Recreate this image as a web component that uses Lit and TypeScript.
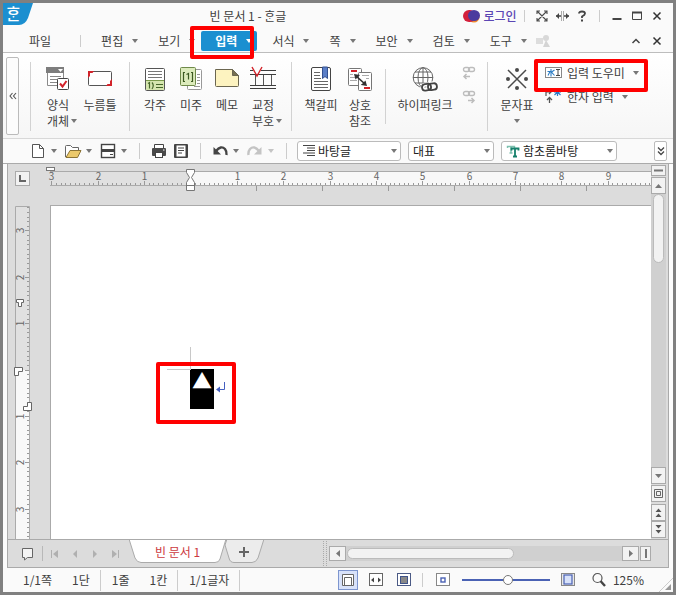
import { LitElement, html, svg, css, nothing } from "lit";
import { customElement, state } from "lit/decorators.js";
import { classMap } from "lit/directives/class-map.js";

const UNIT = 46.35;

const caret = html`<svg class="caret" width="6" height="4" viewBox="0 0 6 4" aria-hidden="true"><path d="M0 0H6L3 4Z" fill="currentColor" /></svg>`;

const icon = (w: number, h: number, body: unknown) =>
  html`<svg width=${w} height=${h} viewBox="0 0 ${w} ${h}" fill="none" aria-hidden="true">${body}</svg>`;

const formObject = icon(26, 26, svg`
  <path d="M2.500 2.500H18.500V19.500H2.500Z" fill="#fff" stroke="#8a8a8a"/>
  <path d="M1 1H19V7H1Z" fill="#7d7d7d"/><path d="M13 3H18L15.500 6Z" fill="#fff"/>
  <path d="M5 10.500H16M5 13.500H12M5 16.500H12" stroke="#888"/>
  <rect x="12.500" y="12.500" width="11" height="11" rx="1" fill="#fff" stroke="#444"/>
  <path d="M15 17.500L17.500 20.500L21.500 15" stroke="#d2232a" stroke-width="2"/>`);
const pressField = icon(26, 26, svg`
  <rect x="1.500" y="5.500" width="23" height="14" rx="1" fill="#fff" stroke="#555"/>
  <path d="M1 5H7L5.500 7H3V10L1 12Z" fill="#d2232a"/><path d="M25 20H19L20.500 18H23V15L25 13Z" fill="#d2232a"/>`);
const footnote = icon(26, 26, svg`
  <rect x="3.500" y="2.500" width="19" height="22" rx="1" fill="#fff" stroke="#555"/>
  <path d="M4 15H22V24H4Z" fill="#d5e6ae"/><path d="M4 14.500H22" stroke="#7a9a4a"/>
  <path d="M6 5.500H20M6 8.500H20M6 11.500H20" stroke="#777"/>
  <path d="M6 17.500L7.500 16.500V22.500M10 16.500Q12.500 19.500 10 23M14 18.500H21M14 21.500H21" stroke="#47672a" stroke-width="1.200"/>`);
const endnote = icon(26, 26, svg`
  <rect x="9.500" y="3.500" width="14" height="20" rx="1" fill="#fff" stroke="#999"/>
  <path d="M19 8.500H22M19 11.500H22M19 14.500H22M19 17.500H22M16 20.500H22" stroke="#999"/>
  <rect x="2.500" y="1.500" width="15" height="18" rx="1" fill="#dcebbc" stroke="#6f8a4a"/>
  <path d="M7 6.500H5.500V15.500H7M13 6.500H14.500V15.500H13M8.500 8.500L10.500 7.500V13.500" stroke="#3c5a22" stroke-width="1.200"/>`);
const memo = icon(26, 26, svg`
  <path d="M1.500 3.500H18.500L24.500 9.500V19.500Q24.500 20.500 23.500 20.500H2.500Q1.500 20.500 1.500 19.500Z" fill="#fdf3c0" stroke="#6b6650"/>
  <path d="M18.500 3.500V9.500H24.500Z" fill="#777052" stroke="#6b6650"/>`);
const proof = icon(28, 26, svg`
  <path d="M1 4.500H4M12 4.500H27M1 8.500H27M1 19.500H27M1 22.500H27" stroke="#3d3d3d"/>
  <path d="M6.500 9V19M14.500 9V19M22.500 9V19" stroke="#555"/>
  <path d="M3 1L8 10L13 1" stroke="#d2232a" stroke-width="1.400"/>`);
const bookmark = icon(26, 26, svg`
  <rect x="3.500" y="1.500" width="19" height="23" rx="1.500" fill="#fff" stroke="#444"/>
  <path d="M6 6.500H12M6 9.500H12M6 12.500H13M6 15.500H20M6 18.500H20M6 21.500H20" stroke="#666"/>
  <path d="M14.500 1V12.500L17 10.500L19.500 12.500V1Z" fill="#5b7fc7" stroke="#34518f"/>`);
const crossRef = icon(26, 26, svg`
  <rect x="1.500" y="2.500" width="13" height="17" rx="1" fill="#fff" stroke="#777"/>
  <rect x="11.500" y="6.500" width="13" height="18" rx="1" fill="#fff" stroke="#777"/>
  <path d="M4 4.500H10M4 5.500H10" stroke="#d2232a"/><path d="M17 21.500H23M17 22.500H23" stroke="#d2232a"/>
  <path d="M3 8.500H6M3 11.500H8M3 14.500H10M15 9.500H22M19 12.500H22M14 18.500H18" stroke="#aaa"/>
  <path d="M9 10L18 18" stroke="#333" stroke-width="1.600"/><path d="M7 8L13 9L8.500 13.500Z" fill="#333"/><path d="M20 20L14 19L18.500 14.500Z" fill="#333"/>`);
const globe = icon(28, 26, svg`
  <circle cx="12" cy="11.500" r="9.800" fill="#fff" stroke="#666"/>
  <ellipse cx="12" cy="11.500" rx="5" ry="9.800" stroke="#666"/>
  <path d="M12 1.500V21.500M2 11.500H22M4 6H20M4 17H20" stroke="#666"/>
  <rect x="11.500" y="18.500" width="9" height="6" rx="3" stroke="#fff" stroke-width="4"/><rect x="17.500" y="17.500" width="9" height="6" rx="3" stroke="#fff" stroke-width="4"/>
  <rect x="11" y="18" width="9" height="6.500" rx="3.200" stroke="#444" stroke-width="1.800" transform="rotate(-8 15 21)"/>
  <rect x="17" y="17.500" width="9" height="6.500" rx="3.200" stroke="#444" stroke-width="1.800" transform="rotate(-8 21 21)"/>`);
const linkPrev = icon(14, 14, svg`
  <rect x="1.500" y="1.500" width="6" height="4" rx="2" stroke="#bdbdbd" stroke-width="1.400"/><rect x="6.500" y="1.500" width="6" height="4" rx="2" stroke="#bdbdbd" stroke-width="1.400"/>
  <path d="M2 10.500H8M4.500 8L2 10.500L4.500 13" stroke="#bdbdbd" stroke-width="1.500"/>`);
const linkNext = icon(14, 14, svg`
  <rect x="1.500" y="1.500" width="6" height="4" rx="2" stroke="#bdbdbd" stroke-width="1.400"/><rect x="6.500" y="1.500" width="6" height="4" rx="2" stroke="#bdbdbd" stroke-width="1.400"/>
  <path d="M6 10.500H12M9.500 8L12 10.500L9.500 13" stroke="#bdbdbd" stroke-width="1.500"/>`);
const symbols = icon(26, 26, svg`
  <path d="M4 4L22 22M22 4L4 22" stroke="#4a4a4a" stroke-width="1.500"/>
  <circle cx="13" cy="4" r="2" fill="#4a4a4a"/><circle cx="13" cy="22" r="2" fill="#4a4a4a"/>
  <circle cx="4" cy="13" r="2" fill="#4a4a4a"/><circle cx="22" cy="13" r="2" fill="#4a4a4a"/>`);
const helper = icon(17, 12, svg`
  <rect x="0.500" y="0.500" width="16" height="10" fill="#fff" stroke="#888"/>
  <path d="M6 2V9.500M2.500 4.500H5L3 8.500M9.500 3L6.500 5L9.500 8.500" stroke="#2b7cc4" stroke-width="1.100"/>
  <path d="M11 2.500H15M13 2.500V8.500M11 8.500H15" stroke="#444"/>`);
const hanja = icon(17, 14, svg`
  <path d="M1 6V2H6M4 0L6 2L4 4" stroke="#555" stroke-width="1.200"/>
  <path d="M4.500 13V8M2 10L4.500 7.500L7 10" stroke="#555" stroke-width="1.300"/>
  <path d="M12.500 0V6M9 2H16M12.500 2L9.500 5M12.500 2L15.500 5" stroke="#2b7cc4" stroke-width="1.200"/>`);

const newDoc = icon(18, 18, svg`<path d="M3.500 2.500H10.500L14.500 6.500V15.500H3.500Z" fill="#fff" stroke="#555"/><path d="M10.500 2.500V6.500H14.500" stroke="#555"/>`);
const openDoc = icon(18, 18, svg`
  <path d="M1.500 15V4.500Q1.500 3.500 2.500 3.500H6.500L8.500 5.500H14.500V8" fill="#fff" stroke="#666"/>
  <path d="M2 15.500L6 8.500H17L13.500 15.500Z" fill="#ecc96b" stroke="#8c7436"/>`);
const saveDoc = icon(18, 18, svg`
  <rect x="2.500" y="2.500" width="13" height="13" fill="#fff" stroke="#444" stroke-width="1.400"/>
  <path d="M2 7H16V10H2Z" fill="#444"/><path d="M11 12.500H14" stroke="#444"/>`);
const printDoc = icon(18, 18, svg`
  <path d="M4.500 6V2.500H13.500V6" fill="#fff" stroke="#444"/><rect x="2" y="6" width="14" height="8" rx="1" fill="#4a4a4a"/>
  <rect x="5.500" y="10.500" width="7" height="5" fill="#fff" stroke="#444"/><path d="M13 8H14.500" stroke="#fff"/>`);
const previewDoc = icon(18, 18, svg`
  <rect x="2" y="2" width="14" height="14" rx="1" fill="#444"/><rect x="4.500" y="3.500" width="9" height="11" fill="#fff"/>
  <path d="M6 6H12M6 8.500H12M6 11H10" stroke="#444" stroke-width="1.200"/>`);
const undo = icon(18, 18, svg`<path d="M5 9Q10 3 14 7Q16 9.500 15.500 13" stroke="#444" stroke-width="2.400"/><path d="M2.500 5V12.500H10Z" fill="#444"/>`);
const redo = icon(18, 18, svg`<path d="M13 9Q8 3 4 7Q2 9.500 2.500 13" stroke="#c4c4c4" stroke-width="2.400"/><path d="M15.500 5V12.500H8Z" fill="#c4c4c4"/>`);
const paragraph = icon(14, 14, svg`<path d="M1 1.500H13M5 4H13M5 6.500H13M1 9H13M5 11.500H13" stroke="#444" stroke-width="1.200"/>`);
const fontMark = icon(14, 14, svg`
  <path d="M1.500 4V2.500H8.500V4M5 2.500V9M3.500 9H6.500" stroke="#7cc0ae" stroke-width="1.400"/>
  <path d="M5.500 6.500V4.500H12.500V6.500M9 4.500V12.500M7 12.500H11" stroke="#16806c" stroke-width="1.800"/>`);

const chevrons = icon(8, 10, svg`<path d="M1 1.500L4 4.500L7 1.500M1 5.500L4 8.500L7 5.500" stroke="#444" stroke-width="1.300"/>`);

interface MenuItem { label: string; active?: boolean }
const MENU: MenuItem[] = [
  { label: "편집" }, { label: "보기" }, { label: "입력", active: true }, { label: "서식" },
  { label: "쪽" }, { label: "보안" }, { label: "검토" }, { label: "도구" },
];

@customElement("app-root")
export class AppRoot extends LitElement {
  @state() private across = window.innerWidth - 75;
  @state() private down = window.innerHeight - 261;

  private measure = () => {
    this.across = window.innerWidth - 75;
    this.down = window.innerHeight - 261;
  };

  connectedCallback() {
    super.connectedCallback();
    window.addEventListener("resize", this.measure);
  }

  disconnectedCallback() {
    window.removeEventListener("resize", this.measure);
    super.disconnectedCallback();
  }

  static styles = css`
    :host {
      display: flex; flex-direction: column; box-sizing: border-box; min-height: 100vh;
      border: 3px solid #808080; background: #fafafa; color: #404040;
      font: 12px/16px "Noto Sans CJK KR", "Noto Sans", sans-serif; white-space: nowrap; overflow: hidden;
    }
    * { box-sizing: border-box; }
    svg { display: block; flex: none; }
    button, select { font: inherit; color: inherit; background: none; border: 0; padding: 0; margin: 0; }
    button { display: flex; align-items: center; justify-content: center; flex: none; }
    .grow { flex: 1; }
    .caret { color: #777; }
    .mark { position: absolute; border: 4px solid #f00; border-radius: 2px; pointer-events: none; z-index: 2; }

    .header { border-bottom: 1px solid #bdbdbd; padding-bottom: 1px; }
    .title-row { display: flex; height: 25px; padding-right: 6px; align-items: center; }
    .logo {
      width: 30px; height: 22px; align-self: flex-start; background: #1b8fd0; color: #fff;
      font-size: 16px; line-height: 20px; font-weight: 500; padding-left: 3px;
      clip-path: path("M0 0H30L25 15Q22 22 16 22H0Z");
    }
    .title { flex: 1; text-align: center; margin: 0; font-size: 12px; font-weight: 400; }
    .login { gap: 3px; width: 54px; color: #5b46b4; font-weight: 500; }
    .bar { width: 1px; height: 12px; background: #ccc; margin: 0 7px; flex: none; }
    .tool { width: 20px; height: 20px; }
    .menu-row { display: flex; align-items: center; height: 23px; padding: 3px 6px 0 12px; gap: 1px; }
    .menu-bar { width: 1px; height: 12px; background: #ccc; margin: 0 5px 0 23px; }
    .menu { height: 20px; padding: 0 5px 0 14px; gap: 9px; border-radius: 2px; }
    .menu.active { background: #1b8fd0; color: #fff; font-weight: 700; }
    .menu.active .caret { color: #fff; }
    .slot { position: relative; }
    .mark.menu-mark { left: -11px; top: -5px; width: 64px; height: 33px; }

    .ribbon { display: flex; align-items: flex-start; height: 86px; padding-left: 3px; border-bottom: 1px solid #d8d8d8; background: linear-gradient(#fff, #f6f6f6); }
    .fold { width: 13px; height: 78px; margin: 4px 11px 0 0; border: 1px solid #bbb; border-radius: 2px; background: #fcfcfc; }
    .rule { width: 1px; height: 69px; margin-top: 9px; background: #d2d2d2; flex: none; }
    .rule.short { height: 55px; margin-top: 16px; }
    .group { display: flex; align-items: flex-start; padding: 13px 5px 0 8px; }
    .group.forms { padding: 13px 8px 0 6px; }
    .group.notes { padding: 13px 10px 0 7px; }
    .group.refs { padding: 13px 7px 0 8px; }
    .big { flex-direction: column; justify-content: flex-start; width: 36px; }
    .big.mid { width: 42px; }
    .big.wide { width: 62px; }
    .big svg + span { margin-top: 5px; }
    .line { display: flex; align-items: center; gap: 2px; }
    .line .caret { margin-right: -8px; }
    .line.only .caret { margin: 6px 0 0; }
    .links { display: flex; flex-direction: column; width: 26px; margin-top: -5px; }
    .links button { height: 24px; }
    .side { display: flex; flex-direction: column; padding: 8px 0 0 2px; align-items: flex-start; }
    .row { display: flex; height: 24px; gap: 5px; }
    .row .caret { margin-left: 3px; }
    .mark.row-mark { left: -11px; top: -2px; width: 114px; height: 33px; }

    .toolbar { display: flex; align-items: center; height: 25px; padding: 0 6px 0 26px; border-bottom: 1px solid #aaa; }
    .pair { display: flex; gap: 2px; margin-right: 5px; }
    .pair.last { margin-right: 0; }
    .act { width: 18px; height: 20px; }
    .drop { width: 10px; height: 20px; }
    .faint .caret { color: #c4c4c4; }
    .split { width: 1px; height: 16px; margin: 0 10px; background: #ccc; flex: none; }
    .print { margin-right: 4px; }
    .combo { display: flex; align-items: center; height: 20px; margin-right: 7px; padding: 0 3px 0 4px; border: 1px solid #bbb; border-radius: 3px; background: #fff; color: #222; }
    .combo select { flex: 1; min-width: 0; appearance: none; outline: 0; }
    .combo.style { width: 104px; gap: 2px; }
    .combo.face { width: 86px; }
    .combo.font { width: 116px; gap: 3px; }
    .more { width: 13px; height: 20px; border: 1px solid #bbb; border-radius: 2px; background: #fff; }

    .editor { flex: 1; display: grid; grid-template: 41px 1fr 28px / 42px 1fr 17px; margin: 0 4px; border: 1px solid #aaa; border-top: 0; background: #dcdcdc; }
    .frame { flex: 1; display: flex; flex-direction: column; background: #fcfcfc; }
    .corner { width: 15px; height: 15px; margin: 7px 0 0 7px; border: 1px solid #aaa; background: #f2f2f2; }
    .ruler { overflow: visible; font-size: 10px; fill: #666; }
    .page { position: relative; border: solid #aaa; border-width: 1px 0 0 1px; background: #fff; padding: 163px 0 0 139px; }
    .picked { position: relative; display: flex; justify-content: center; width: 24px; height: 40px; background: #000; }
    .glyph { color: #fff; font-size: 20px; line-height: 24px; }
    .crop { position: absolute; right: 24px; bottom: 40px; width: 24px; height: 23px; border: solid #c8c8c8; border-width: 0 1px 1px 0; margin: 0 -1px -1px 0; }
    .enter { position: absolute; left: 26px; top: 13px; }
    .mark.pick-mark { left: -34px; top: -7px; width: 80px; height: 62px; }

    .vbar { grid-row: 1 / 3; grid-column: 3; display: flex; flex-direction: column; padding: 1px 1px 1px 0; }
    .box { width: 15px; height: 17px; border: 1px solid #aaa; background: #f2f2f2; }
    .box.thin { height: 11px; margin-bottom: 1px; }
    .vtrack { flex: 1; width: 15px; background: #d0d0d0; padding: 0 2px; }
    .vthumb { height: 69px; border: 1px solid #bbb; border-radius: 6px; background: #f2f2f2; }
    .box.gap { margin: 1px 0 2px; }

    .tabs { grid-column: 1 / 4; display: flex; border-top: 1px solid #aaa; }
    .nav { display: flex; align-items: center; width: 121px; padding-left: 13px; }
    .nav .bar { height: 15px; background: #b8b8b8; margin: 0 2px 0 8px; }
    .nav .step { width: 20px; height: 20px; color: #b0b0b0; }
    .tab { position: relative; width: 97px; height: 23px; color: #cc3a40; }
    .tab.plus { width: 40px; margin-left: -2px; }
    .tab svg.shape { position: absolute; left: 0; top: 0; }
    .tab span, .tab .cross { position: relative; }
    .grip { width: 4px; margin: 1px 2px 1px 59px; border: dotted #aaa; border-width: 0 1px; }
    .hbar { flex: 1; display: flex; align-items: flex-start; padding: 6px 17px 0 0; }
    .hbar .box { width: 17px; height: 15px; }
    .hbar .box.end { width: 11px; margin-left: 1px; }
    .htrack { flex: 1; height: 15px; background: #d0d0d0; padding: 2px 1px; }
    .hthumb { width: 61%; height: 11px; border: 1px solid #bbb; border-radius: 6px; background: #f2f2f2; }

    .status { position: relative; display: flex; align-items: center; height: 24px; padding: 0 29px 0 20px; }
    .status .cell { margin-right: 20px; }
    .status .cell.end { margin-right: 10px; }
    .status .bar { height: 21px; margin: 0 11px 0 0; }
    .view { width: 20px; height: 20px; margin-right: 8px; border: 1px solid transparent; }
    .view.on { border-color: #7d95cf; background: #d8e2fa; }
    .status .bar.mid { height: 14px; margin: 0 13px 0 0; }
    .zoom { appearance: none; width: 88px; height: 12px; margin: 0 11px 0 12px; background: linear-gradient(#4a62b4, #4a62b4) center / 100% 2px no-repeat; }
    .zoom::-webkit-slider-thumb { appearance: none; width: 10px; height: 10px; border: 1px solid #777; border-radius: 50%; background: #fff; }
    .lens { margin: 0 6px 0 16px; }
    .size { position: absolute; right: 0; bottom: 0; }
  `;

  private hRuler() {
    const zero = 140.5;
    const marks = [];
    for (let i = -30; zero + (i * UNIT) / 10 < this.across; i++) {
      const x = Math.round(zero + (i * UNIT) / 10) + 0.5;
      marks.push(svg`<path d="M${x} ${i % 10 ? 19 : 17}V21" stroke="#999"/>`);
      if (i % 10 === 0 && i !== 0)
        marks.push(svg`<text x=${x} y="16" text-anchor="middle">${Math.abs(i / 10)}</text>`);
    }
    for (let x = 206.5; x < this.across; x += 66) marks.push(svg`<path d="M${x} 22V27" stroke="#999"/>`);
    return html`<svg class="ruler" width="100%" height="41" aria-hidden="true">
      <rect x="0" y="7" width="100%" height="15" fill="#e0e0e0" />
      <rect x="140" y="7" width=${this.across - 140} height="15" fill="#f8f8f8" />
      <path d="M0 7.500H${this.across}M0 21.500H${this.across}" stroke="#aaa" />
      ${marks}
      <rect x="-3.500" y="3.500" width="8" height="3" fill="#fff" stroke="#777" />
      <path d="M136.500 5.500H144.500V8.500L141.500 13.500L144.500 18.500V26.500H136.500V18.500L139.500 13.500L136.500 8.500ZM136.500 21.500H144.500" fill="#fff" stroke="#777" />
    </svg>`;
  }

  private vRuler() {
    const zero = 164.5;
    const marks = [];
    for (let i = -35; zero + (i * UNIT) / 10 < this.down; i++) {
      const y = Math.round(zero + (i * UNIT) / 10) + 0.5;
      marks.push(svg`<path d="M${i % 10 ? 19 : 17} ${y}H21" stroke="#999"/>`);
      if (i % 10 === 0 && i !== 0)
        marks.push(svg`<text transform="translate(16 ${y}) rotate(-90)" text-anchor="middle">${Math.abs(i / 10)}</text>`);
    }
    return html`<svg class="ruler" width="42" height="100%" aria-hidden="true">
      <rect x="7" y="1" width="15" height="164" fill="#e0e0e0" />
      <rect x="7" y="165" width="15" height=${Math.max(0, this.down - 165)} fill="#f8f8f8" />
      <path d="M7.500 ${this.down}V1.500H21.500V${this.down}" fill="none" stroke="#aaa" />
      ${marks}
      <g fill="#fff" stroke="#666">
        <path d="M8.500 94.500H15.500V97.500H13.500V101.500H10.500V97.500H8.500Z" />
        <path d="M6.500 162.500H14.500V166.500H10.500V170.500H6.500Z" />
        <path d="M19.500 197.500H23.500V205.500H15.500V201.500H19.500Z" />
      </g>
    </svg>`;
  }

  private big(art: unknown, lines: string[], cls = "", drop = false) {
    return html`<button class="big ${cls}">${art}
      ${lines.map((t, i) => html`<span class="line">${t}${drop && i === lines.length - 1 ? caret : nothing}</span>`)}
    </button>`;
  }

  private pair(name: string, art: unknown, last = false, faint = false) {
    return html`<div class=${classMap({ pair: true, last, faint })}>
      <button class="act" aria-label=${name}>${art}</button>
      <button class="drop" aria-label="${name} 옵션">${caret}</button>
    </div>`;
  }

  render() {
    return html`
      <header class="header">
        <div class="title-row">
          <div class="logo">ᄒᆞᆫ</div>
          <h1 class="title">빈 문서 1 - ᄒᆞᆫ글</h1>
          <button class="login">${icon(17, 14, svg`<circle cx="11" cy="8" r="5.500" fill="#f08a2c"/><rect x="0" y="1" width="13" height="12" rx="6" fill="#d3203c"/><ellipse cx="11" cy="6.500" rx="6" ry="5.500" fill="#4b3b9e"/>`)}로그인</button>
          <span class="bar"></span>
          <button class="tool" aria-label="전체 화면">${icon(12, 12, svg`<path d="M1 4V1H4M8 1H11V4M11 8V11H8M4 11H1V8M1.500 1.500L10.500 10.500M10.500 1.500L1.500 10.500" stroke="#4a4a4a" stroke-width="1.100"/>`)}</button>
          <button class="tool" aria-label="너비 조절">${icon(13, 12, svg`<path d="M5.500 1V11M7.500 1V11" stroke="#aaa"/><path d="M0 6H5M8 6H13" stroke="#444" stroke-width="1.400"/><path d="M3 3V9L0 6ZM10 3V9L13 6Z" fill="#444"/>`)}</button>
          <button class="tool" aria-label="도움말">${icon(10, 12, svg`<path d="M2 3.500Q2 1.500 5 1.500Q8 1.500 8 3.500Q8 5 5 6.500V8" stroke="#444" stroke-width="1.800"/><path d="M4 9.500H6V11.500H4Z" fill="#444"/>`)}</button>
          <span class="bar"></span>
          <button class="tool" aria-label="최소화">${icon(10, 10, svg`<path d="M0.500 8H9.500" stroke="#444" stroke-width="2"/>`)}</button>
          <button class="tool" aria-label="최대화">${icon(10, 10, svg`<path d="M0.500 1V8.500H9.500V1" stroke="#444"/><path d="M0 1.500H10" stroke="#444" stroke-width="2"/>`)}</button>
          <button class="tool" aria-label="닫기">${icon(10, 10, svg`<path d="M1.500 1.500L8.500 8.500M8.500 1.500L1.500 8.500" stroke="#333" stroke-width="1.500"/>`)}</button>
        </div>
        <nav class="menu-row">
          <button class="menu">파일</button>
          <span class="menu-bar"></span>
          ${MENU.map((m) => html`<div class="slot">
            <button class=${classMap({ menu: true, active: !!m.active })}>${m.label}${caret}</button>
            ${m.active ? html`<span class="mark menu-mark"></span>` : nothing}
          </div>`)}
          <button class="tool" aria-label="개체" disabled>${icon(16, 14, svg`<path d="M1 4H8V10H1Z" fill="#ddd"/><path d="M8 13L11 6L15 13Z" fill="#d4d4d4"/><circle cx="11" cy="4" r="3" fill="#d8d8d8"/>`)}</button>
          <span class="grow"></span>
          <button class="tool" aria-label="접기">${icon(10, 10, svg`<path d="M1.500 7L5 3.500L8.500 7" stroke="#444" stroke-width="1.500"/>`)}</button>
          <button class="tool" aria-label="문서 닫기">${icon(10, 10, svg`<path d="M1.500 1.500L8.500 8.500M8.500 1.500L1.500 8.500" stroke="#333" stroke-width="1.500"/>`)}</button>
        </nav>
      </header>

      <section class="ribbon">
        <button class="fold" aria-label="이전">${icon(8, 8, svg`<path d="M3.500 1L1 4L3.500 7M7 1L4.500 4L7 7" stroke="#555" stroke-width="1.100"/>`)}</button>
        <span class="rule"></span>
        <div class="group forms">${this.big(formObject, ["양식", "개체"], "mid", true)}${this.big(pressField, ["누름틀"], "mid")}</div>
        <span class="rule"></span>
        <div class="group notes">${this.big(footnote, ["각주"])}${this.big(endnote, ["미주"])}${this.big(memo, ["메모"])}${this.big(proof, ["교정", "부호"], "", true)}</div>
        <span class="rule"></span>
        <div class="group refs">${this.big(bookmark, ["책갈피"], "mid")}${this.big(crossRef, ["상호", "참조"])}</div>
        <span class="rule short"></span>
        <div class="group">${this.big(globe, ["하이퍼링크"], "wide")}
          <div class="links"><button aria-label="이전 링크">${linkPrev}</button><button aria-label="다음 링크">${linkNext}</button></div>
        </div>
        <span class="rule"></span>
        <div class="group"><button class="big mid">${symbols}<span class="line">문자표</span><span class="line only">${caret}</span></button></div>
        <div class="side">
          <div class="slot"><button class="row">${helper}입력 도우미${caret}</button><span class="mark row-mark"></span></div>
          <button class="row">${hanja}한자 입력${caret}</button>
        </div>
      </section>

      <section class="toolbar">
        ${this.pair("새 문서", newDoc)}${this.pair("불러오기", openDoc)}${this.pair("저장", saveDoc, true)}
        <span class="split"></span>
        <button class="act print" aria-label="인쇄">${printDoc}</button>
        <button class="act" aria-label="미리 보기">${previewDoc}</button>
        <span class="split"></span>
        ${this.pair("되돌리기", undo)}${this.pair("다시 실행", redo, true, true)}
        <span class="split"></span>
        <label class="combo style">${paragraph}<select aria-label="스타일"><option>바탕글</option></select>${caret}</label>
        <label class="combo face"><select aria-label="언어"><option>대표</option></select>${caret}</label>
        <label class="combo font">${fontMark}<select aria-label="글꼴"><option>함초롬바탕</option></select>${caret}</label>
        <span class="grow"></span>
        <button class="more" aria-label="더 보기">${chevrons}</button>
      </section>

      <div class="frame">
        <main class="editor">
          <button class="corner" aria-label="탭 종류">${icon(9, 9, svg`<path d="M2 1V7H8" stroke="#666" stroke-width="2"/>`)}</button>
          ${this.hRuler()}
          ${this.vRuler()}
          <article class="page">
            <div class="picked">
              <span class="crop"></span>
              <span class="glyph">▲</span>
              <svg class="enter" width="10" height="11" viewBox="0 0 10 11" fill="none" aria-hidden="true"><path d="M8.500 0V7.500H2" stroke="#4560c0" /><path d="M4 4.500V10.500L0 7.500Z" fill="#4560c0" /></svg>
              <span class="mark pick-mark"></span>
            </div>
          </article>
          <div class="vbar">
            <button class="box thin" aria-label="나누기">${icon(9, 3, svg`<path d="M0 1.500H9" stroke="#777" stroke-width="2"/>`)}</button>
            <button class="box" aria-label="위로">${icon(7, 4, svg`<path d="M0 4H7L3.500 0Z" fill="#777"/>`)}</button>
            <div class="vtrack"><div class="vthumb"></div></div>
            <button class="box" aria-label="아래로">${icon(7, 4, svg`<path d="M0 0H7L3.500 4Z" fill="#777"/>`)}</button>
            <button class="box gap" aria-label="찾아가기">${icon(9, 9, svg`<path d="M0.500 0.500H8.500V8.500H0.500ZM2.500 2.500H6.500V6.500H2.500Z" stroke="#666"/>`)}</button>
            <button class="box" aria-label="이전 쪽">${icon(7, 9, svg`<path d="M0.500 4H6.500L3.500 0.500ZM0.500 9H6.500L3.500 5.500Z" fill="#555"/>`)}</button>
            <button class="box" aria-label="다음 쪽">${icon(7, 9, svg`<path d="M0.500 0H6.500L3.500 3.500ZM0.500 5H6.500L3.500 8.500Z" fill="#555"/>`)}</button>
          </div>
          <div class="tabs">
            <div class="nav">
              <button aria-label="문서 목록">${icon(13, 14, svg`<path d="M1.500 1.500H11.500V10.500H6.500L3.500 13L3.500 10.500H1.500Z" fill="#f4f4f4" stroke="#666"/>`)}</button>
              <span class="bar"></span>
              <button class="step" aria-label="처음">${icon(8, 8, svg`<path d="M0.500 0V8" stroke="currentColor"/><path d="M7 0V8L2 4Z" fill="currentColor"/>`)}</button>
              <button class="step" aria-label="이전">${icon(8, 8, svg`<path d="M6 0V8L2 4Z" fill="currentColor"/>`)}</button>
              <button class="step" aria-label="다음">${icon(8, 8, svg`<path d="M2 0V8L6 4Z" fill="currentColor"/>`)}</button>
              <button class="step" aria-label="끝">${icon(8, 8, svg`<path d="M7.500 0V8" stroke="currentColor"/><path d="M1 0V8L6 4Z" fill="currentColor"/>`)}</button>
            </div>
            <button class="tab"><svg class="shape" width="97" height="23" viewBox="0 0 97 23" aria-hidden="true"><path d="M0 -1L6 18Q8 22.500 12 22.500H86Q90 22.500 91 19L97 -1" fill="#fff" stroke="#aaa" /></svg><span>빈 문서 1</span></button>
            <button class="tab plus" aria-label="새 탭"><svg class="shape" width="40" height="23" viewBox="0 0 40 23" aria-hidden="true"><path d="M1 5L5 18Q6 22.500 10 22.500H28Q32 22.500 34 18L40 -1H3Z" fill="#ececec" stroke="#aaa" /></svg><svg class="cross" width="10" height="10" viewBox="0 0 10 10" aria-hidden="true"><path d="M5 0V10M0 5H10" stroke="#666" stroke-width="2" /></svg></button>
            <span class="grip"></span>
            <div class="hbar">
              <button class="box" aria-label="왼쪽">${icon(4, 7, svg`<path d="M4 0V7L0 3.500Z" fill="#777"/>`)}</button>
              <div class="htrack"><div class="hthumb"></div></div>
              <button class="box" aria-label="오른쪽">${icon(4, 7, svg`<path d="M0 0V7L4 3.500Z" fill="#777"/>`)}</button>
              <button class="box end" aria-label="세로 나누기">${icon(2, 9, svg`<path d="M1 0V9" stroke="#777" stroke-width="2"/>`)}</button>
            </div>
          </div>
        </main>
      </div>

      <footer class="status">
        <span class="cell">1/1쪽</span><span class="cell end">1단</span><span class="bar"></span>
        <span class="cell">1줄</span><span class="cell end">1칸</span><span class="bar"></span>
        <span class="cell end">1/1글자</span><span class="bar"></span>
        <span class="grow"></span>
        <button class="view on" aria-label="쪽 윤곽">${icon(14, 14, svg`<path d="M1.500 12.500V1.500H12.500V12.500ZM3.500 12.500V4.500H10.500V12.500" fill="#fff" stroke="#666"/>`)}</button>
        <button class="view" aria-label="폭 맞춤">${icon(14, 14, svg`<rect x="0.500" y="0.500" width="13" height="12" fill="#fff" stroke="#666"/><path d="M5 4.500V9.500L2 7ZM9 4.500V9.500L12 7Z" fill="#444"/>`)}</button>
        <button class="view" aria-label="쪽 맞춤">${icon(14, 14, svg`<rect x="0.500" y="0.500" width="13" height="12" fill="#fff" stroke="#4b5a85"/><rect x="3.500" y="3.500" width="7" height="7" fill="#888" stroke="#3f5288"/>`)}</button>
        <span class="bar mid"></span>
        <button aria-label="축소">${icon(14, 14, svg`<rect x="0.500" y="0.500" width="13" height="12" fill="#fff" stroke="#888"/><rect x="5" y="5" width="4" height="4" stroke="#4a62b4" stroke-width="1.400"/>`)}</button>
        <input class="zoom" type="range" min="0" max="100" value="52" aria-label="확대 비율" />
        <button class="fit" aria-label="확대">${icon(14, 14, svg`<rect x="0.500" y="0.500" width="13" height="12" fill="#e8e8e8" stroke="#888"/><rect x="3" y="2" width="8" height="9" fill="#d8e2fa" stroke="#4a62b4" stroke-width="1.200"/>`)}</button>
        <button class="lens" aria-label="확대/축소">${icon(16, 16, svg`<circle cx="6.500" cy="6" r="4.500" stroke="#555" stroke-width="1.200"/><path d="M9.500 9L14 14" stroke="#444" stroke-width="2.400"/>`)}</button>
        <span>125%</span>
        <svg class="size" width="14" height="14" viewBox="0 0 14 14" aria-hidden="true"><path d="M0 14L14 0" stroke="#ccc" /><path d="M12 6V12H6Z" fill="#999" /></svg>
      </footer>
    `;
  }
}
